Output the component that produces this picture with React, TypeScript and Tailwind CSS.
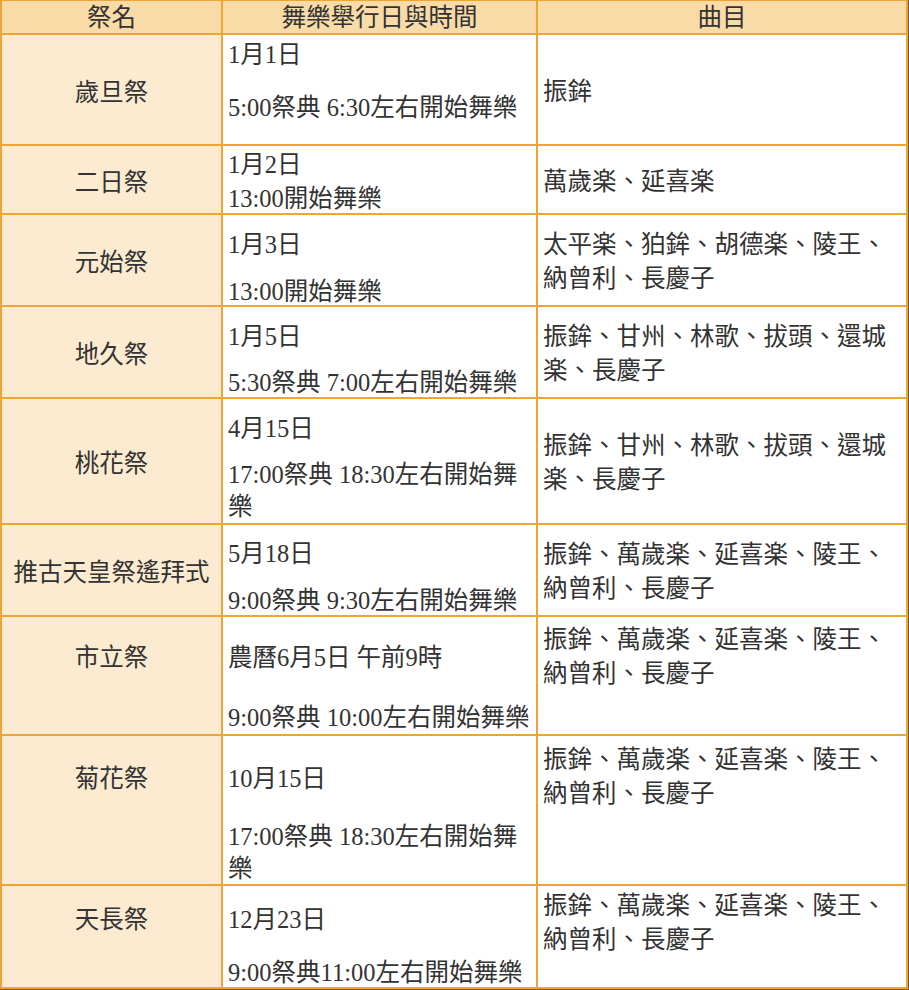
import React from 'react';

type Row = {
  name: string;
  lines: { text: string; mt: number }[];
  pt: number;
  pieces: string[];
  top?: number; // 曲目 top padding when aligned to the top
};

// 祭典と舞樂の予定
const rows: Row[] = [
  { name: '歲旦祭', pt: 4, lines: [{ text: '1月1日', mt: 0 }, { text: '5:00祭典 6:30左右開始舞樂', mt: 21 }], pieces: ['振鉾'] },
  { name: '二日祭', pt: 3, lines: [{ text: '1月2日', mt: 0 }, { text: '13:00開始舞樂', mt: 2 }], pieces: ['萬歲楽、延喜楽'] },
  { name: '元始祭', pt: 14, lines: [{ text: '1月3日', mt: 0 }, { text: '13:00開始舞樂', mt: 15 }], pieces: ['太平楽、狛鉾、胡德楽、陵王、', '納曾利、長慶子'] },
  { name: '地久祭', pt: 14, lines: [{ text: '1月5日', mt: 0 }, { text: '5:30祭典 7:00左右開始舞樂', mt: 14 }], pieces: ['振鉾、甘州、林歌、拔頭、還城', '楽、長慶子'] },
  { name: '桃花祭', pt: 14, lines: [{ text: '4月15日', mt: 0 }, { text: '17:00祭典 18:30左右開始舞樂', mt: 14 }], pieces: ['振鉾、甘州、林歌、拔頭、還城', '楽、長慶子'] },
  { name: '推古天皇祭遙拜式', pt: 13, lines: [{ text: '5月18日', mt: 0 }, { text: '9:00祭典 9:30左右開始舞樂', mt: 15 }], pieces: ['振鉾、萬歲楽、延喜楽、陵王、', '納曾利、長慶子'] },
  { name: '市立祭', pt: 25, top: 6, lines: [{ text: '農曆6月5日 午前9時', mt: 0 }, { text: '9:00祭典 10:00左右開始舞樂', mt: 28 }], pieces: ['振鉾、萬歲楽、延喜楽、陵王、', '納曾利、長慶子'] },
  { name: '菊花祭', pt: 27, top: 7, lines: [{ text: '10月15日', mt: 0 }, { text: '17:00祭典 18:30左右開始舞樂', mt: 26 }], pieces: ['振鉾、萬歲楽、延喜楽、陵王、', '納曾利、長慶子'] },
  { name: '天長祭', pt: 18, top: 3, lines: [{ text: '12月23日', mt: 0 }, { text: '9:00祭典11:00左右開始舞樂', mt: 21 }], pieces: ['振鉾、萬歲楽、延喜楽、陵王、', '納曾利、長慶子'] },
];

export default function App() {
  return (
    <div
      className="w-[909px] h-[990px] bg-white text-[#333333] text-[24.5px]"
      style={{ fontFamily: '"Liberation Serif", "Noto Sans CJK TC", serif' }}
    >
      <div className="w-[909px] border-r border-b border-[#7a5a2a]">
        <div className="grid grid-cols-[219px_313px_368px] grid-rows-[32px_109px_67px_90px_90px_124px_90px_117px_148px_101px] gap-[2px] bg-[#eda535] pt-[1px] px-[2px] pb-[2px]">
          <div className="bg-[#f8dba6] flex items-center justify-center pt-[2px] leading-[32px]">祭名</div>
          <div className="bg-[#f8dba6] flex items-center justify-center pt-[2px] leading-[32px]">舞樂舉行日與時間</div>
          <div className="bg-[#f8dba6] flex items-center justify-center pt-[2px] leading-[32px]">曲目</div>

          {rows.map((r) => (
            <React.Fragment key={r.name}>
              {r.top === undefined ? (
                <div className="bg-[#fcebd0] flex items-center justify-center pt-[5px] leading-[33px] whitespace-nowrap">
                  {r.name}
                </div>
              ) : (
                <div className="bg-[#fcebd0] text-center leading-[32px] whitespace-nowrap" style={{ paddingTop: r.pt }}>
                  {r.name}
                </div>
              )}
              <div className="bg-white px-[5px] leading-[32px]" style={{ paddingTop: r.pt }}>
                {r.lines.map((l, i) => (
                  <div key={i} style={{ marginTop: l.mt }}>
                    {l.text}
                  </div>
                ))}
              </div>
              {r.top === undefined ? (
                <div className="bg-white flex flex-col justify-center px-[5px] pt-[4px] leading-[34px]">
                  {r.pieces.map((p, i) => (
                    <div key={i} className="whitespace-nowrap">
                      {p}
                    </div>
                  ))}
                </div>
              ) : (
                <div className="bg-white px-[5px] leading-[34px]" style={{ paddingTop: r.top }}>
                  {r.pieces.map((p, i) => (
                    <div key={i} className="whitespace-nowrap">
                      {p}
                    </div>
                  ))}
                </div>
              )}
            </React.Fragment>
          ))}
        </div>
      </div>
    </div>
  );
}
